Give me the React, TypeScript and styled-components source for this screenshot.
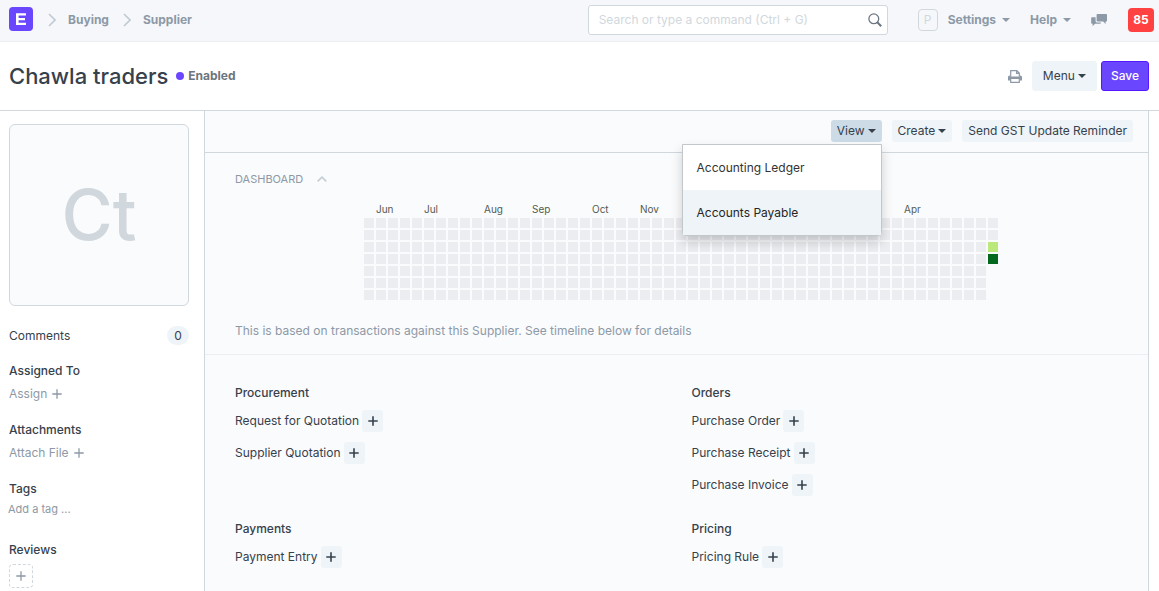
import React from "react";
import styled, { createGlobalStyle } from "styled-components";

const c = {
  text: "#36414c",
  muted: "#8d99a6",
  border: "#d1d8dd",
  soft: "#ebeff2",
  panel: "#fafbfd",
  button: "#eef4f7",
  primary: "#6b46ff",
};

const GlobalStyle = createGlobalStyle`
  * { box-sizing: border-box; }
  body {
    margin: 0;
    background: #fff;
    color: ${c.text};
    font: 400 12px/18px Inter, "Open Sans", sans-serif;
  }
  button, input { font: inherit; color: inherit; }
  button { cursor: pointer; }
  a { color: inherit; text-decoration: none; }
  h1, h2, h3, h4, p, ul { margin: 0; padding: 0; }
`;

const Page = styled.div`
  display: flex;
  flex-direction: column;
  min-height: 100vh;
`;

const Navbar = styled.header`
  display: flex;
  align-items: center;
  justify-content: space-between;
  height: 42px;
  padding: 0 5px 1px 9px;
  background: #f5f7fb;
  border-bottom: 1px solid ${c.soft};
  color: ${c.muted};
  font-weight: 700;
`;

const Breadcrumbs = styled.nav`
  display: flex;
  align-items: center;
  gap: 12px;
`;

const Logo = styled.a`
  display: flex;
  width: 24px;
  height: 24px;
  border-radius: 4px;
  background: ${c.primary};
  margin: 0 3px 2px 0;
`;

const Crumb = styled.a`
  margin-right: 2px;
`;

const NavRight = styled.div`
  display: flex;
  align-items: center;
`;

const Search = styled.label`
  display: flex;
  align-items: center;
  width: 300px;
  height: 30px;
  padding: 0 5px 0 10px;
  margin-right: 30px;
  background: #fff;
  border: 1px solid ${c.border};
  border-radius: 3px;
`;

const SearchInput = styled.input`
  flex: 1;
  min-width: 0;
  padding: 0;
  border: 0;
  outline: 0;
  background: transparent;
  font-weight: 400;
  &::placeholder { color: ${c.border}; opacity: 1; }
`;

const Avatar = styled.span`
  width: 20px;
  height: 22px;
  margin-right: 10px;
  border: 1px solid ${c.border};
  border-radius: 4px;
  color: ${c.border};
  font-weight: 400;
  line-height: 20px;
  text-align: center;
`;

const NavButton = styled.button`
  display: flex;
  align-items: center;
  gap: 6px;
  padding: 0;
  margin-right: 20px;
  border: 0;
  background: none;
`;

const Count = styled.button`
  width: 26px;
  height: 24px;
  padding: 0;
  margin-left: 1px;
  border: 0;
  border-radius: 4px;
  background: #ff4141;
  color: #fff;
`;

const PageHead = styled.div`
  display: flex;
  align-items: center;
  justify-content: space-between;
  height: 69px;
  padding: 0 10px 0 9px;
  border-bottom: 1px solid ${c.border};
`;

const TitleArea = styled.div`
  display: flex;
  align-items: center;
`;

const Title = styled.h1`
  font-size: 22px;
  font-weight: 500;
  line-height: 30px;
`;

const Indicator = styled.span`
  display: flex;
  align-items: center;
  gap: 4px;
  margin-left: 8px;
  color: #6c7680;
  font-weight: 700;
  &::before {
    content: "";
    width: 8px;
    height: 8px;
    border-radius: 50%;
    background: ${c.primary};
  }
`;

const Actions = styled.div`
  display: flex;
  align-items: center;
  gap: 4px;
`;

const IconButton = styled.button`
  display: flex;
  padding: 0;
  margin-right: 6px;
  border: 0;
  background: none;
  color: ${c.muted};
`;

const Button = styled.button<{ $primary?: boolean }>`
  display: flex;
  align-items: center;
  justify-content: center;
  gap: 3px;
  height: 30px;
  padding: 0 ${(p) => (p.$primary ? 9 : 10)}px;
  border: 1px solid ${(p) => (p.$primary ? "#5319ff" : c.button)};
  border-radius: 3px;
  background: ${(p) => (p.$primary ? c.primary : c.button)};
  color: ${(p) => (p.$primary ? "#fff" : c.text)};
  font-weight: ${(p) => (p.$primary ? 500 : 400)};
`;

const Body = styled.div`
  display: flex;
  flex: 1;
  padding-right: 10px;
`;

const Sidebar = styled.aside`
  width: 204px;
  flex: none;
  padding: 13px 15px 3px 9px;
`;

const Picture = styled.div`
  display: flex;
  align-items: center;
  justify-content: center;
  height: 182px;
  margin-bottom: 20px;
  border: 1px solid ${c.border};
  border-radius: 6px;
  background: ${c.panel};
  color: ${c.border};
  font-size: 70px;
  font-weight: 500;
  line-height: 72px;
`;

const Comments = styled.a`
  display: flex;
  align-items: center;
  justify-content: space-between;
  margin-bottom: 17px;
`;

const Pill = styled.span`
  width: 22px;
  border-radius: 10px;
  background: ${c.button};
  line-height: 19px;
  text-align: center;
`;

const SideGroup = styled.section`
  display: flex;
  flex-direction: column;
  align-items: flex-start;
  gap: 5px;
  margin-bottom: 18px;
`;

const Heading = styled.h4`
  font-size: 12px;
  font-weight: 500;
`;

const SideLink = styled.button`
  display: flex;
  align-items: center;
  gap: 5px;
  padding: 0;
  border: 0;
  background: none;
  color: ${c.muted};
`;

const TagInput = styled.input`
  width: 100%;
  height: 18px;
  padding: 0;
  margin: -3px 0 5px -1px;
  border: 0;
  outline: 0;
  font-size: 11px;
  &::placeholder { color: ${c.muted}; opacity: 1; }
`;

const ReviewButton = styled.button`
  display: flex;
  align-items: center;
  justify-content: center;
  width: 24px;
  height: 24px;
  padding: 0;
  border: 1px dashed ${c.border};
  border-radius: 4px;
  background: none;
  color: ${c.muted};
`;

const Main = styled.main`
  flex: 1;
  min-width: 0;
  border: solid ${c.border};
  border-width: 0 1px;
  background: ${c.panel};
`;

const Toolbar = styled.div`
  display: flex;
  align-items: center;
  justify-content: flex-end;
  gap: 10px;
  height: 42px;
  padding: 0 15px 1px;
  border-bottom: 1px solid ${c.border};
`;

const SmallButton = styled.button<{ $active?: boolean }>`
  display: flex;
  align-items: center;
  gap: 3px;
  height: 22px;
  padding: 0 6px;
  border: 0;
  border-radius: 3px;
  background: ${(p) => (p.$active ? "#cddbe6" : c.button)};
`;

const Dropdown = styled.div`
  position: relative;
`;

const MenuList = styled.ul`
  position: absolute;
  z-index: 1;
  top: calc(100% + 2px);
  right: 0;
  width: 200px;
  border: 1px solid #c3c7ca;
  border-radius: 0 0 4px 4px;
  background: #fff;
  box-shadow: 0 6px 12px rgba(0, 0, 0, 0.18);
  list-style: none;
`;

const MenuLink = styled.a<{ $hover?: boolean }>`
  display: block;
  padding: 0 14px;
  background: ${(p) => (p.$hover ? c.button : "#fff")};
  color: ${(p) => (p.$hover ? "#262626" : "#333")};
  line-height: 45px;
`;

const Dashboard = styled.section`
  padding: 17px 30px 14px;
  border-bottom: 1px solid ${c.soft};
  color: ${c.muted};
`;

const SectionToggle = styled.button`
  display: flex;
  align-items: center;
  gap: 14px;
  padding: 0;
  border: 0;
  background: none;
  color: ${c.muted};
  font-size: 11px;
  text-transform: uppercase;
`;

const ChartArea = styled.div`
  display: flex;
  justify-content: center;
  padding: 14px 0 22px;
`;

const ChartLabel = styled.text`
  fill: #555b51;
  font-size: 10px;
`;

const Links = styled.section`
  display: grid;
  grid-template-columns: 1fr 1fr;
  gap: 24px 0;
  padding: 29px 15px 22px;
`;

const LinkGroup = styled.div`
  display: flex;
  flex-direction: column;
  gap: 10px;
  padding: 0 15px;
  & > h4 { margin-bottom: -2px; }
`;

const LinkRow = styled.div`
  display: flex;
  align-items: center;
  gap: 3px;
`;

const AddButton = styled.button`
  display: flex;
  align-items: center;
  justify-content: center;
  width: 21px;
  height: 22px;
  padding: 0;
  border: 0;
  border-radius: 3px;
  background: ${c.button};
`;

const Caret = () => (
  <svg width="8" height="4" viewBox="0 0 8 4" aria-hidden="true">
    <path d="M0 0h8L4 4z" fill="currentColor" />
  </svg>
);

const Plus = ({ thick }: { thick?: boolean }) => (
  <svg width="10" height="10" viewBox="0 0 10 10" aria-hidden="true">
    <path d="M5 0.3v9.4M0.3 5h9.4" stroke="currentColor" strokeWidth={thick ? 1.6 : 1.3} />
  </svg>
);

const Chevron = () => (
  <svg width="8" height="14" viewBox="0 0 8 14" fill="none" aria-hidden="true">
    <path d="M1 1l6 6-6 6" stroke="#c0cad3" strokeWidth="1.6" />
  </svg>
);

const CELL = 12;
const WEEKS = 53;
const months: [string, number][] = [
  ["Jun", 1],
  ["Jul", 5],
  ["Aug", 10],
  ["Sep", 14],
  ["Oct", 19],
  ["Nov", 23],
  ["Apr", 45],
];
const lastWeek = ["#ebedf0", "#ebedf0", "#bbe87b", "#04691f"];

const Heatmap = () => (
  <svg width="645" height="98" viewBox="-10 0 645 98" role="img" aria-label="Transactions by day">
    {months.map(([name, week]) => (
      <ChartLabel key={name} x={week * CELL} y="11">
        {name}
      </ChartLabel>
    ))}
    {Array.from({ length: WEEKS }, (_, week) =>
      (week === WEEKS - 1 ? lastWeek : Array<string>(7).fill("#ebedf0")).map((fill, day) => (
        <rect key={`${week}-${day}`} x={week * CELL} y={16 + day * CELL} width="10" height="10" fill={fill} />
      )),
    )}
  </svg>
);

const groups = [
  { title: "Procurement", items: ["Request for Quotation", "Supplier Quotation"] },
  { title: "Orders", items: ["Purchase Order", "Purchase Receipt", "Purchase Invoice"] },
  { title: "Payments", items: ["Payment Entry"] },
  { title: "Pricing", items: ["Pricing Rule"] },
];

export default function App() {
  return (
    <Page>
      <GlobalStyle />
      <Navbar>
        <Breadcrumbs aria-label="Breadcrumb">
          <Logo href="#" aria-label="Home">
            <svg width="24" height="24" viewBox="0 0 24 24" aria-hidden="true">
              <path d="M7 6.2h10v2.2H9.6v2.7h6.4v2.1H9.6v2.6H17V18H7z" fill="#fff" />
            </svg>
          </Logo>
          <Chevron />
          <Crumb href="#">Buying</Crumb>
          <Chevron />
          <Crumb href="#">Supplier</Crumb>
        </Breadcrumbs>
        <NavRight>
          <Search>
            <SearchInput type="text" aria-label="Search" placeholder="Search or type a command (Ctrl + G)" />
            <svg width="14" height="14" viewBox="0 0 14 14" fill="none" aria-hidden="true">
              <circle cx="5.8" cy="5.8" r="4.9" stroke="#6c7680" strokeWidth="1.3" />
              <path d="M9.3 9.3l3.9 3.9" stroke="#6c7680" strokeWidth="2" />
            </svg>
          </Search>
          <Avatar>P</Avatar>
          <NavButton type="button">
            Settings <Caret />
          </NavButton>
          <NavButton type="button">
            Help <Caret />
          </NavButton>
          <NavButton type="button" aria-label="Chat">
            <svg width="16" height="13" viewBox="0 0 16 13" fill="currentColor" aria-hidden="true">
              <path d="M6.4 0H15.2q.8 0 .8.8v6q0 .8-.8.8H14.6V10L12.2 7.6H6.4q-.8 0-.8-.8v-6q0-.8.8-.8z" />
              <path d="M4.6 3.2H1q-.8 0-.8.8v5q0 .8.8.8h.6v2.4L4 9.8h5q.8 0 .8-.8V8.6H6.2q-1.6 0-1.6-1.6z" />
            </svg>
          </NavButton>
          <Count type="button">85</Count>
        </NavRight>
      </Navbar>

      <PageHead>
        <TitleArea>
          <Title>Chawla traders</Title>
          <Indicator>Enabled</Indicator>
        </TitleArea>
        <Actions>
          <IconButton type="button" aria-label="Print">
            <svg width="14" height="13" viewBox="0 0 14 13" fill="none" aria-hidden="true">
              <path d="M2.7 6.4V.7h6.1l2.5 2.4v3.3M8.6.8v2.5h2.6" stroke="currentColor" strokeWidth="1.2" />
              <path d="M1.6 5.4h.9v1.2h9V5.4h.9Q14 5.4 14 7v3.6h-2.2V9H2.2v1.6H0V7q0-1.6 1.6-1.6z" fill="currentColor" />
              <path d="M2.7 9v3.3h8.6V9" stroke="currentColor" strokeWidth="1.2" />
            </svg>
          </IconButton>
          <Button type="button">
            Menu <Caret />
          </Button>
          <Button type="button" $primary>
            Save
          </Button>
        </Actions>
      </PageHead>

      <Body>
        <Sidebar>
          <Picture>Ct</Picture>
          <Comments href="#">
            Comments <Pill>0</Pill>
          </Comments>
          <SideGroup>
            <Heading>Assigned To</Heading>
            <SideLink type="button">
              Assign <Plus />
            </SideLink>
          </SideGroup>
          <SideGroup>
            <Heading>Attachments</Heading>
            <SideLink type="button">
              Attach File <Plus />
            </SideLink>
          </SideGroup>
          <SideGroup>
            <Heading>Tags</Heading>
            <TagInput type="text" aria-label="Tags" placeholder="Add a tag ..." />
          </SideGroup>
          <SideGroup>
            <Heading>Reviews</Heading>
            <ReviewButton type="button" aria-label="Add review">
              <Plus />
            </ReviewButton>
          </SideGroup>
        </Sidebar>

        <Main>
          <Toolbar>
            <Dropdown>
              <SmallButton type="button" $active aria-expanded="true">
                View <Caret />
              </SmallButton>
              <MenuList>
                <li>
                  <MenuLink href="#">Accounting Ledger</MenuLink>
                </li>
                <li>
                  <MenuLink href="#" $hover>
                    Accounts Payable
                  </MenuLink>
                </li>
              </MenuList>
            </Dropdown>
            <SmallButton type="button">
              Create <Caret />
            </SmallButton>
            <SmallButton type="button">Send GST Update Reminder</SmallButton>
          </Toolbar>

          <Dashboard>
            <SectionToggle type="button">
              Dashboard
              <svg width="10" height="6" viewBox="0 0 10 6" fill="none" aria-hidden="true">
                <path d="M.7 5.4L5 1.1l4.3 4.3" stroke="#c5ced5" strokeWidth="1.6" />
              </svg>
            </SectionToggle>
            <ChartArea>
              <Heatmap />
            </ChartArea>
            <p>This is based on transactions against this Supplier. See timeline below for details</p>
          </Dashboard>

          <Links>
            {groups.map((group) => (
              <LinkGroup key={group.title}>
                <Heading>{group.title}</Heading>
                {group.items.map((item) => (
                  <LinkRow key={item}>
                    <a href="#">{item}</a>
                    <AddButton type="button" aria-label={`New ${item}`}>
                      <Plus thick />
                    </AddButton>
                  </LinkRow>
                ))}
              </LinkGroup>
            ))}
          </Links>
        </Main>
      </Body>
    </Page>
  );
}
